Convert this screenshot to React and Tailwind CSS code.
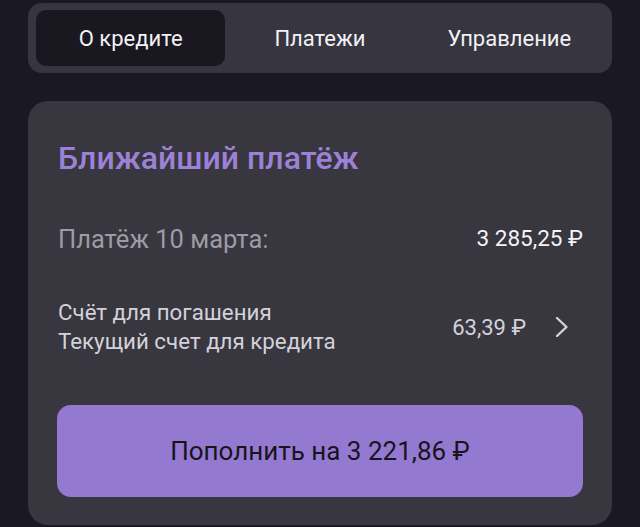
const tabs = ['О кредите', 'Платежи', 'Управление'];

export default function App() {
  return (
    <div className="min-h-[527px] bg-[#1a1822] px-[28px] pt-[3px] font-['Roboto',sans-serif] overflow-hidden">
      {/* Tabs */}
      <div className="grid grid-cols-3 h-[70px] rounded-[14px] bg-[#37353f] py-[7px] px-[8px]">
        {tabs.map((t, i) => (
          <div
            key={t}
            className={`flex items-center justify-center rounded-[10px] text-[22px] text-[#f2f1f5] ${i === 0 ? 'bg-[#19171f]' : ''}`}
          >
            {t}
          </div>
        ))}
      </div>

      {/* Nearest payment card */}
      <div className="mt-[28px] rounded-[20px] bg-[#38363f] px-[29px] pt-[38px] pb-[28px]">
        <h2 className="text-[32px] leading-[38px] font-medium text-[#9b82d6] pl-px">Ближайший платёж</h2>

        <div className="mt-[47px] flex items-center justify-between h-[30px] pl-px">
          <span className="text-[25.5px] text-[#9d9ca5]">Платёж 10 марта:</span>
          <span className="text-[22.5px] text-[#f4f3f7]">3 285,25 ₽</span>
        </div>

        <div className="mt-[44px] flex items-center justify-between pl-px">
          <div className="text-[22.3px] leading-[29px] text-[#d3d2d9]">
            <div>Счёт для погашения</div>
            <div>Текущий счет для кредита</div>
          </div>
          <div className="flex items-center gap-[29px] text-[22px] text-[#d3d2d9]">
            <span>63,39 ₽</span>
            <svg width="14" height="22" viewBox="0 0 14 22" fill="none" className="mr-[14px]">
              <path d="M2 2 L11.5 11 L2 20" stroke="#d3d2d9" strokeWidth="2.4" strokeLinecap="round" strokeLinejoin="round" />
            </svg>
          </div>
        </div>

        <button className="mt-[49px] w-full h-[92px] rounded-[14px] bg-[#9479d1] text-[26px] text-[#17151c]">
          Пополнить на 3 221,86 ₽
        </button>
      </div>
    </div>
  );
}
